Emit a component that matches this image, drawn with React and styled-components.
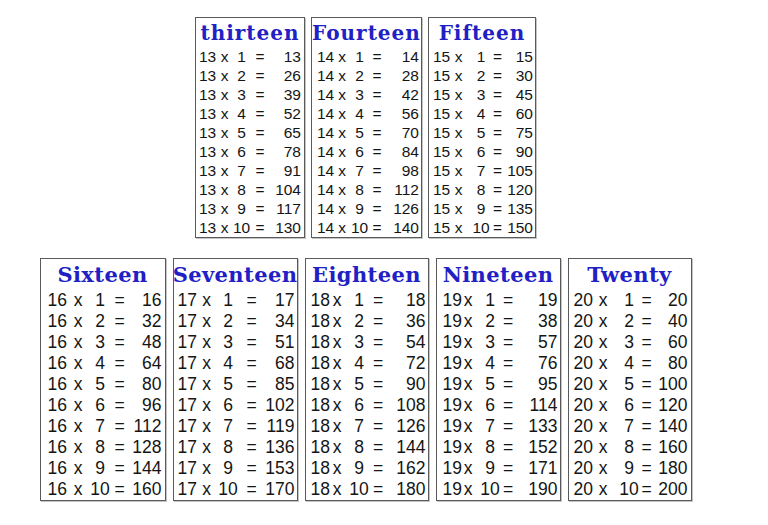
import React from 'react';
import styled, { createGlobalStyle } from 'styled-components';

const GlobalStyle = createGlobalStyle`
  html, body {
    margin: 0;
    padding: 0;
    background: #fff;
  }
  body {
    font-family: "Liberation Sans", Arial, sans-serif;
    color: #1c1c1c;
  }
`;

const Page = styled.div`
  width: 768px;
  height: 525px;
  padding: 17px 0 0 39px;
  box-sizing: border-box;
  display: flex;
  flex-direction: column;
  align-items: flex-start;
  gap: 20px;
`;

const Row = styled.div`
  width: 653px;
  display: flex;
  justify-content: center;
  gap: ${(p) => p.$gap}px;
`;

const Card = styled.div`
  width: ${(p) => p.$w}px;
  box-sizing: border-box;
  border: 1px solid #5a5a5a;
  box-shadow: 1px 1px 0 #c4c4c4;
  background: #fff;
`;

const Title = styled.div`
  height: ${(p) => (p.$big ? 31 : 29)}px;
  display: flex;
  align-items: center;
  justify-content: center;
  white-space: nowrap;
  font-family: "DejaVu Serif", "Liberation Serif", serif;
  font-weight: bold;
  font-size: ${(p) => (p.$big ? 21 : 20)}px;
  letter-spacing: ${(p) => (p.$big ? 0.4 : 1)}px;
  color: #2020c4;
`;

const Line = styled.div`
  display: grid;
  grid-template-columns: ${(p) => p.$cols};
  padding-left: ${(p) => p.$pl}px;
  padding-right: ${(p) => p.$pr}px;
  font-size: ${(p) => (p.$big ? 17.5 : 15.5)}px;
  line-height: ${(p) => (p.$big ? 21 : 19)}px;
  white-space: nowrap;
  color: #151515;
`;

const Cell = styled.span`
  text-align: ${(p) => p.$align || 'center'};
`;

// measured from the card's outer left edge: start, x centre, multiplier centre, equals centre, right end
const top = [
  { n: 13, title: 'thirteen', w: 110, pos: [4, 29.5, 46.5, 65, 106] },
  { n: 14, title: 'Fourteen', w: 111, pos: [6, 31, 48.5, 66, 108] },
  { n: 15, title: 'Fifteen', w: 108, pos: [5, 30.5, 53, 69.5, 105] },
];

const bottom = [
  { n: 16, title: 'Sixteen', w: 126, pos: [8, 38.5, 60.5, 80, 122] },
  { n: 17, title: 'Seventeen', w: 125, pos: [5, 34, 55.5, 79, 122] },
  { n: 18, title: 'Eighteen', w: 124, pos: [6, 32.5, 54.5, 73.5, 121] },
  { n: 19, title: 'Nineteen', w: 125, pos: [7, 32.5, 54.5, 72.5, 122] },
  { n: 20, title: 'Twenty', w: 124, pos: [6, 35.5, 61.5, 79, 120] },
];

function columns(pos, big) {
  const [start, xc, mc, ec] = pos;
  const xw = big ? 10 : 9;
  const mw = big ? 20 : 18;
  const ew = big ? 11 : 10;
  const c1 = Math.max(0, xc - xw / 2 - start);
  const s1 = Math.max(0, mc - mw / 2 - (xc + xw / 2));
  const s2 = Math.max(0, ec - ew / 2 - (mc + mw / 2));
  return `${c1}px ${xw}px ${s1}px ${mw}px ${s2}px ${ew}px 1fr`;
}

function Table({ data, big }) {
  const { n, title, w, pos } = data;
  const cols = columns(pos, big);
  const rows = [1, 2, 3, 4, 5, 6, 7, 8, 9, 10];
  return (
    <Card $w={w}>
      <Title $big={big}>{title}</Title>
      {rows.map((m) => (
        <Line key={m} $cols={cols} $pl={pos[0] - 1} $pr={w - 1 - pos[4]} $big={big}>
          <Cell $align="left">{n}</Cell>
          <Cell>x</Cell>
          <span />
          <Cell>{m}</Cell>
          <span />
          <Cell>=</Cell>
          <Cell $align="right">{n * m}</Cell>
        </Line>
      ))}
    </Card>
  );
}

export default function App() {
  return (
    <>
      <GlobalStyle />
      <Page>
        <Row $gap={6}>
          {top.map((t) => (
            <Table key={t.n} data={t} />
          ))}
        </Row>
        <Row $gap={7}>
          {bottom.map((t) => (
            <Table key={t.n} data={t} big />
          ))}
        </Row>
      </Page>
    </>
  );
}
